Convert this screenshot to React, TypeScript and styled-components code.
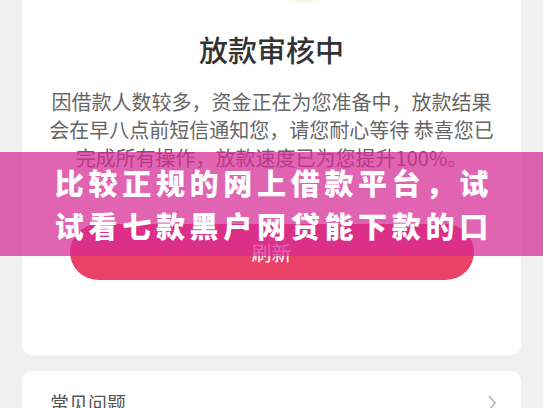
import React from 'react'
import styled, { createGlobalStyle } from 'styled-components'

const pageGrey = '#f0f0f0';
const brandRed = '#e94167';

const GlobalStyle = createGlobalStyle`
  html, body {
    margin: 0;
    padding: 0;
    background: ${pageGrey};
    font-family: "Noto Sans CJK SC", "Noto Sans", "Liberation Sans", sans-serif;
  }
`

const Screen = styled.div`
  position: relative;
  width: 543px;
  height: 408px;
  overflow: hidden;
  background: ${pageGrey};
  box-sizing: border-box;
  padding: 0 22px;
  display: flex;
  flex-direction: column;
  gap: 16px;
`

const Card = styled.section`
  background: #fff;
  border-radius: 0 0 10px 10px;
  display: flex;
  flex-direction: column;
  align-items: center;
  padding-bottom: 75px;
`

const IconTail = styled.svg`
  display: block;
  margin-left: 64px;
`

const Title = styled.h1`
  margin: 25px 0 0;
  font-size: 29px;
  line-height: 40px;
  font-weight: 500;
  color: #333;
`

const Notice = styled.p`
  margin: 19px 0 0;
  font-size: 20px;
  line-height: 28px;
  color: #666;
  text-align: center;
  white-space: nowrap;
`

const RefreshButton = styled.button`
  margin-top: 52px;
  width: 404px;
  height: 56px;
  border: none;
  border-radius: 28px;
  background: ${brandRed};
  color: #fff;
  font-family: inherit;
  font-size: 20px;
`

const FaqCard = styled.section`
  background: #fff;
  border-radius: 10px;
  display: flex;
  align-items: center;
  justify-content: space-between;
  padding: 22px 24px 22px 28px;
  height: 64px;
  box-sizing: border-box;
`

const FaqLabel = styled.span`
  font-size: 19px;
  line-height: 20px;
  color: #555;
`

const Banner = styled.div`
  position: absolute;
  left: 0;
  right: 0;
  top: 152px;
  height: 104px;
  box-sizing: border-box;
  padding-top: 9px;
  background: rgba(214, 40, 150, 0.72);
  display: flex;
  flex-direction: column;
  align-items: center;
`

const BannerLine = styled.div`
  font-size: 29px;
  line-height: 43px;
  font-weight: 900;
  letter-spacing: 4.7px;
  padding-left: 4.7px;
  color: #fff;
  white-space: nowrap;
`

export default function App() {
  return (
    <>
      <GlobalStyle />
      <Screen>
        <Card>
          <IconTail width="40" height="4" viewBox="0 0 40 4">
            <ellipse cx="20" cy="-6" rx="19" ry="9" fill="#f8f6e2" />
          </IconTail>
          <Title>放款审核中</Title>
          <Notice>
            因借款人数较多，资金正在为您准备中，放款结果<br />
            会在早八点前短信通知您，请您耐心等待 恭喜您已<br />
            完成所有操作，放款速度已为您提升100%。
          </Notice>
          <RefreshButton>刷新</RefreshButton>
        </Card>
        <FaqCard>
          <FaqLabel>常见问题</FaqLabel>
          <svg width="10" height="18" viewBox="0 0 10 18">
            <path d="M2 2 L8 9 L2 16" fill="none" stroke="#bbb" strokeWidth="1.8" />
          </svg>
        </FaqCard>
        <Banner>
          <BannerLine>比较正规的网上借款平台，试</BannerLine>
          <BannerLine>试看七款黑户网贷能下款的口</BannerLine>
        </Banner>
      </Screen>
    </>
  )
}
